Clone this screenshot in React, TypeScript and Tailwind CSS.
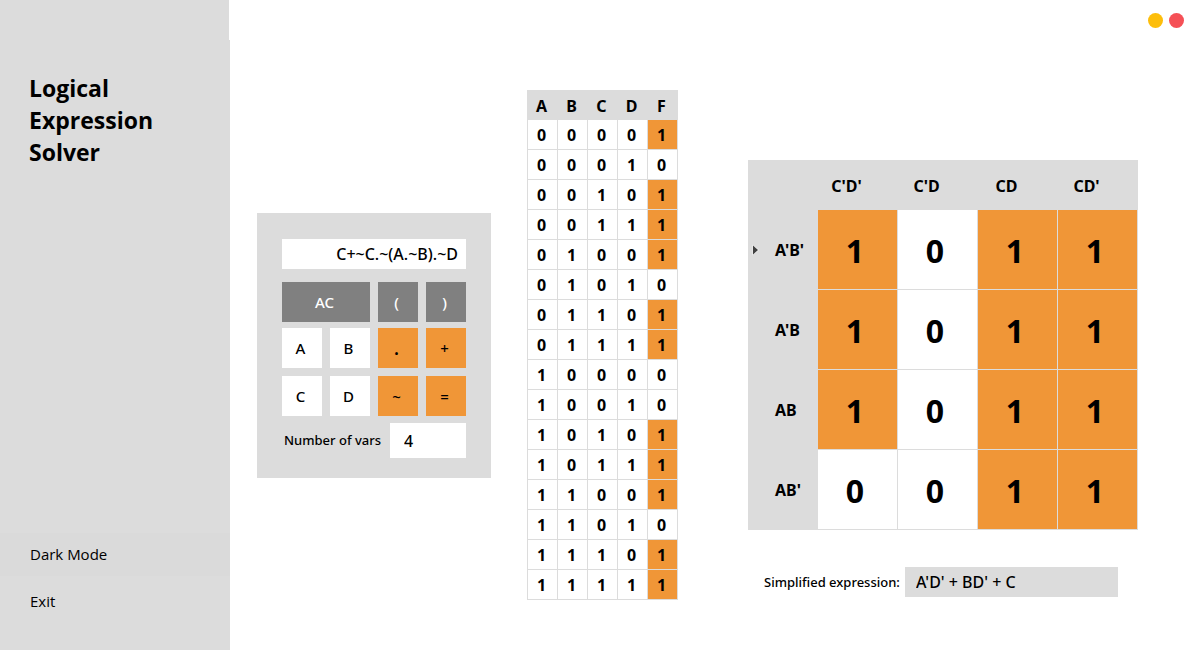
import { useState } from "react";

const FONT = "font-['Noto_Sans','Open_Sans',sans-serif]";

const outputs = [1, 0, 1, 1, 1, 0, 1, 1, 0, 0, 1, 1, 1, 0, 1, 1];

const truthRows = outputs.map((f, i) => [(i >> 3) & 1, (i >> 2) & 1, (i >> 1) & 1, i & 1, f]);

const mapColumns = ["C'D'", "C'D", "CD", "CD'"];

const mapRows = [
  { label: "A'B'", values: [1, 0, 1, 1] },
  { label: "A'B", values: [1, 0, 1, 1] },
  { label: "AB", values: [1, 0, 1, 1] },
  { label: "AB'", values: [0, 0, 1, 1] },
];

const keyTones = {
  gray: "bg-[#808080] text-white",
  white: "bg-white text-black",
  orange: "bg-[#f09637] text-black",
};

function Key({
  label,
  tone,
  wide = false,
  onPress,
}: {
  label: string;
  tone: keyof typeof keyTones;
  wide?: boolean;
  onPress: (label: string) => void;
}) {
  return (
    <button
      type="button"
      onClick={() => onPress(label)}
      className={`flex h-10 items-center justify-center pr-[3px] font-medium ${label === "." ? "text-xl" : "text-[15px]"} ${keyTones[tone]} ${wide ? "col-span-2" : ""}`}
    >
      {label}
    </button>
  );
}

function Sidebar() {
  return (
    <aside className="flex w-[230px] shrink-0 flex-col justify-between bg-[#dcdcdc] pt-[72px] pb-[27px]">
      <h1 className="w-[180px] pl-[29px] text-[23px] leading-8 font-bold font-['Open_Sans',sans-serif]">
        Logical Expression Solver
      </h1>
      <nav className="flex flex-col gap-1 text-[15px] font-['Open_Sans',sans-serif]">
        <button type="button" className="h-[43px] bg-[#dadada] pl-[30px] text-left">
          Dark Mode
        </button>
        <button type="button" className="h-[43px] pl-[30px] text-left">
          Exit
        </button>
      </nav>
    </aside>
  );
}

function Calculator() {
  const [expression, setExpression] = useState("C+~C.~(A.~B).~D");
  const press = (label: string) => {
    if (label === "AC") setExpression("");
    else if (label !== "=") setExpression((value) => value + label);
  };

  return (
    <section aria-label="Calculator" className="mt-px w-[234px] shrink-0 bg-[#dcdcdc] px-[25px] pt-[26px] pb-5">
      <input
        aria-label="Expression"
        value={expression}
        onChange={(event) => setExpression(event.target.value)}
        className="block h-[30px] w-full bg-white pr-2 text-right text-base font-medium outline-none"
      />
      <div className="mt-[13px] grid grid-cols-4 gap-x-2">
        <Key label="AC" tone="gray" wide onPress={press} />
        <Key label="(" tone="gray" onPress={press} />
        <Key label=")" tone="gray" onPress={press} />
      </div>
      <div className="mt-1.5 grid grid-cols-4 gap-2">
        <Key label="A" tone="white" onPress={press} />
        <Key label="B" tone="white" onPress={press} />
        <Key label="." tone="orange" onPress={press} />
        <Key label="+" tone="orange" onPress={press} />
        <Key label="C" tone="white" onPress={press} />
        <Key label="D" tone="white" onPress={press} />
        <Key label="~" tone="orange" onPress={press} />
        <Key label="=" tone="orange" onPress={press} />
      </div>
      <div className="mt-[7px] flex items-center justify-between pl-0.5">
        <label htmlFor="vars" className="text-[13px] font-medium">
          Number of vars
        </label>
        <input
          id="vars"
          defaultValue="4"
          className="h-[35px] w-[76px] bg-white pl-3.5 text-base font-medium outline-none"
        />
      </div>
    </section>
  );
}

function TruthTable() {
  return (
    <table className="ml-9 w-[151px] shrink-0 table-fixed border-separate border-spacing-0 border-l border-[#dcdcdc] text-center text-base leading-5 font-bold">
      <thead>
        <tr className="h-[30px] bg-[#dcdcdc]">
          {["A", "B", "C", "D", "F"].map((name) => (
            <th key={name} scope="col" className="p-0 pt-0.5 pr-[3px]">
              {name}
            </th>
          ))}
        </tr>
      </thead>
      <tbody>
        {truthRows.map((row, i) => (
          <tr key={i} className="h-[30px]">
            {row.map((value, j) => (
              <td
                key={j}
                className={`border-r border-b border-[#dcdcdc] p-0 pt-px pr-0.5 ${j === 4 && value ? "bg-[#f09637]" : "bg-white"}`}
              >
                {value}
              </td>
            ))}
          </tr>
        ))}
      </tbody>
    </table>
  );
}

function KarnaughMap() {
  return (
    <table className="w-[390px] table-fixed border-separate border-spacing-0 bg-[#dcdcdc]">
      <thead>
        <tr className="h-[50px] text-base leading-5">
          <td className="w-[70px] p-0" />
          {mapColumns.map((name) => (
            <th key={name} scope="col" className="p-0 pt-0.5 pr-[23px] font-bold">
              {name}
            </th>
          ))}
        </tr>
      </thead>
      <tbody>
        {mapRows.map((row, i) => (
          <tr key={row.label} className="h-20">
            <th scope="row" className="p-0 text-left text-base font-bold">
              <span className="flex items-center">
                <span className="w-[27px] pl-1">
                  {i === 0 && (
                    <svg width="7" height="12" viewBox="0 0 7 12" aria-hidden="true">
                      <path d="M0.5 0.5L6.5 5.5V6.5L0.5 11.5Z" fill="#f2f2f2" />
                      <path d="M1 1.5L6 6L1 10.5Z" fill="#404040" />
                    </svg>
                  )}
                </span>
                {row.label}
              </span>
            </th>
            {row.values.map((value, j) => (
              <td
                key={j}
                className={`border-r border-b border-[#dcdcdc] p-0 pt-0.5 pr-[5px] text-center text-[32px] leading-10 font-bold ${value ? "bg-[#f09637]" : "bg-white"}`}
              >
                {value}
              </td>
            ))}
          </tr>
        ))}
      </tbody>
    </table>
  );
}

export default function App() {
  return (
    <div className={`flex min-h-screen bg-white text-black ${FONT}`}>
      <Sidebar />
      <div className="flex min-w-0 flex-1 flex-col">
        <header className="relative -ml-px flex h-10 items-center justify-end gap-1.5 bg-white pr-4">
          <button type="button" aria-label="Minimize" className="size-[15px] rounded-full bg-[#fdbe0b]" />
          <button type="button" aria-label="Close" className="size-[15px] rounded-full bg-[#f55056]" />
        </header>
        <main className="flex flex-1 items-center pl-[27px]">
          <Calculator />
          <TruthTable />
          <section aria-label="Karnaugh map" className="ml-[70px] flex shrink-0 flex-col gap-[37px] pt-[67px]">
            <KarnaughMap />
            <div className="flex items-center justify-between pr-5 pl-4">
              <label htmlFor="result" className="pt-0.5 text-[13px] font-medium">
                Simplified expression:
              </label>
              <input
                id="result"
                readOnly
                value="A'D' + BD' + C"
                className="h-[30px] w-[213px] bg-[#dcdcdc] pl-[11px] text-base font-medium outline-none"
              />
            </div>
          </section>
        </main>
      </div>
    </div>
  );
}
